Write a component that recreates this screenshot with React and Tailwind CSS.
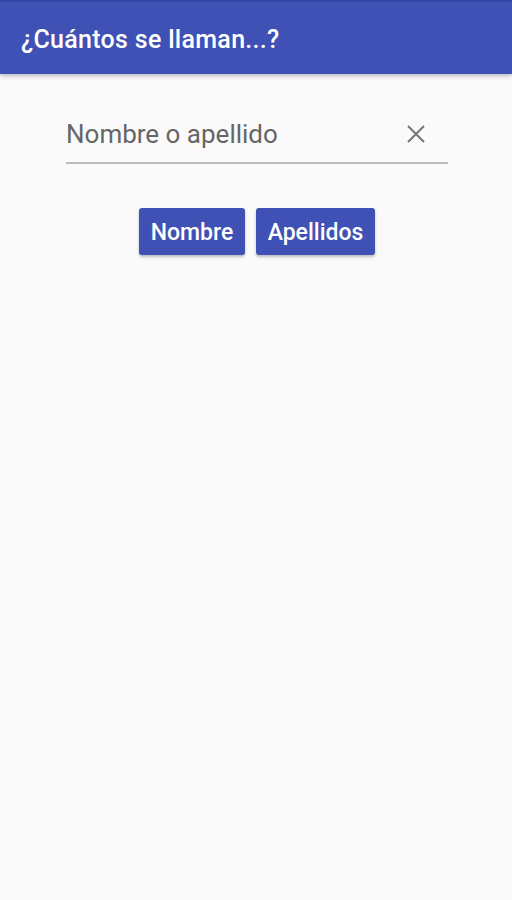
import React, { useState } from 'react';

const ClearIcon = () => (
  <svg width="20" height="20" viewBox="0 0 20 20" fill="none" stroke="#757575" strokeWidth="2">
    <path d="M2 2L18 18M18 2L2 18" />
  </svg>
);

export default function App() {
  const [query, setQuery] = useState('');

  return (
    <div className="min-h-[900px] bg-[#fafafa] font-['Roboto',sans-serif]">
      <header className="h-[74px] bg-[#3f51b5] border-t-2 border-[#3447a6] flex items-center px-[21px] shadow-[0_2px_4px_rgba(0,0,0,0.25)]">
        <h1 className="text-white text-[25px] font-medium tracking-[0.3px] pt-[4px]">¿Cuántos se llaman...?</h1>
      </header>

      <div className="pl-[66px] pr-[64px] pt-[28px]">
        <div className="flex items-center border-b-2 border-[#bdbdbd] h-[62px] pt-[4px]">
          <input
            value={query}
            onChange={(e) => setQuery(e.target.value)}
            placeholder="Nombre o apellido"
            className="flex-1 bg-transparent outline-none text-[26px] text-[#333] placeholder:text-[#666]"
          />
          <button onClick={() => setQuery('')} className="mr-[22px] flex items-center">
            <ClearIcon />
          </button>
        </div>
      </div>

      <div className="flex justify-center gap-[11px] pt-[44px] pl-[2px]">
        <button className="h-[47px] w-[106px] pt-[3px] rounded-[3px] bg-[#3f51b5] text-white text-[23px] font-medium shadow-[0_2px_3px_rgba(0,0,0,0.25)]">
          Nombre
        </button>
        <button className="h-[47px] w-[119px] pt-[3px] rounded-[3px] bg-[#3f51b5] text-white text-[23px] font-medium shadow-[0_2px_3px_rgba(0,0,0,0.25)]">
          Apellidos
        </button>
      </div>
    </div>
  );
}
